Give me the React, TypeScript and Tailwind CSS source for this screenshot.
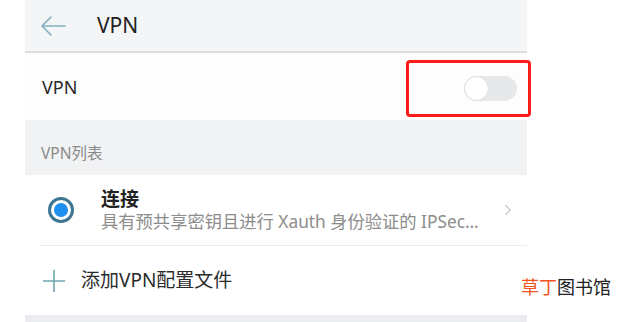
import { ChevronRight } from 'lucide-react';

const cjk = { fontFamily: '"Noto Sans", "Noto Sans CJK SC", sans-serif' };

function BackArrow() {
  return (
    <svg width="26" height="20" viewBox="0 0 26 20" fill="none" stroke="#7fb4bd" strokeWidth={1.6} strokeLinecap="round" strokeLinejoin="round">
      <path d="M25 10H2M11 1L2 10l9 9" />
    </svg>
  );
}

function PlusIcon() {
  return (
    <svg width="24" height="24" viewBox="0 0 24 24" fill="none" stroke="#6ea7ad" strokeWidth={1.6}>
      <path d="M12 1v22M1 12h22" />
    </svg>
  );
}

export default function App() {
  return (
    <div className="relative flex w-[620px] h-[322px] overflow-hidden bg-white text-[#2b2b2b]" style={cjk}>
      <div className="w-[25px] shrink-0" />

      {/* Settings panel */}
      <div className="w-[502px] shrink-0 flex flex-col">
        <div className="h-[53px] shrink-0 flex items-center bg-[#f4f5f7] border-b-2 border-[#dcdddf] pl-[15px]">
          <BackArrow />
          <span className="ml-[31px] text-[21px] leading-none text-[#222]">VPN</span>
        </div>

        <div className="h-[67px] shrink-0 flex items-center justify-between bg-[#fdfdfd] pl-[17px] pr-[10px]">
          <span className="text-[18px] leading-none text-[#2a2a2a]">VPN</span>
        </div>

        <div className="h-[55px] shrink-0 flex items-center bg-[#f1f2f4] pl-[16px] pt-[12px]">
          <span className="text-[15.5px] leading-none text-[#8a8a8a]">VPN列表</span>
        </div>

        <div className="h-[70px] shrink-0 flex items-center bg-white pl-[23px] pr-[10px]">
          <div className="w-[26px] h-[26px] rounded-full border-[3px] border-[#3d7592] flex items-center justify-center">
            <div className="w-[14px] h-[14px] rounded-full bg-[#1f8ff0]" />
          </div>
          <div className="ml-[27px] flex flex-col flex-1 min-w-0">
            <span className="text-[19px] leading-[24px] font-bold text-[#222]">连接</span>
            <span className="text-[17.3px] leading-[22px] text-[#8c8c8c] whitespace-nowrap">具有预共享密钥且进行 Xauth 身份验证的 IPSec…</span>
          </div>
          <ChevronRight className="w-[18px] h-[18px] text-[#c4c4c4] ml-[6px]" strokeWidth={1.5} />
        </div>

        <div className="bg-white pl-[15px]">
          <div className="h-px bg-[#ececec]" />
        </div>

        <div className="h-[69px] shrink-0 flex items-center bg-white pl-[17px]">
          <PlusIcon />
          <span className="ml-[15px] text-[19px] leading-none text-[#2a2a2a]">添加VPN配置文件</span>
        </div>

        <div className="flex-1 bg-[#ecedf0]" />
      </div>

      {/* highlight box around the switch */}
      <div className="absolute left-[406px] top-[60px] w-[125px] h-[57px] rounded-[4px] border-[3px] border-[#ff1a1a] flex items-center justify-end pr-[11px]">
        <div className="w-[53px] h-[25px] rounded-full bg-[#e6e8ea] flex items-center">
          <div className="w-[25px] h-[25px] rounded-full bg-white border border-[#dcdedf]" />
        </div>
      </div>

      {/* watermark */}
      <div className="absolute left-[521px] top-[277px] text-[18px] leading-none whitespace-nowrap" style={{ fontFamily: '"Noto Sans CJK SC", sans-serif' }}>
        <span className="text-[#f2551c]">草丁</span>
        <span className="text-[#222]">图书馆</span>
      </div>
    </div>
  );
}
